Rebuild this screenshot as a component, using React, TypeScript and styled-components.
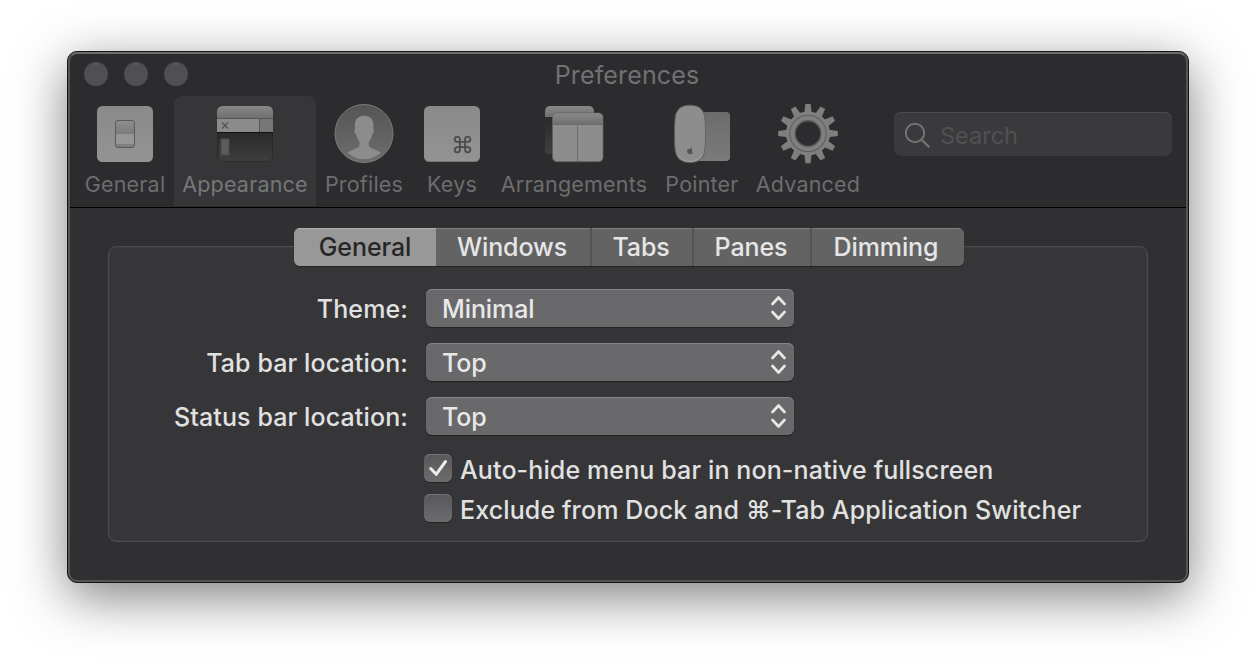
import React from "react";
import styled, { createGlobalStyle } from "styled-components";
import { FaApple } from "react-icons/fa";

const GlobalStyle = createGlobalStyle`
  * { box-sizing: border-box; }
  body { margin: 0; background: #fff; overflow: hidden; }
`;

const Desktop = styled.div`
  width: 1256px;
  height: 666px;
  padding: 51px 67px 0;
  background: #fff;
  font-family: Inter, "Liberation Sans", sans-serif;
`;

const Window = styled.div`
  position: relative;
  display: flex;
  flex-direction: column;
  width: 1122px;
  height: 532px;
  border: 1px solid #151516;
  border-radius: 10px;
  background: #303032;
  box-shadow: 0 14px 52px rgba(0, 0, 0, 0.5);
  &::after {
    content: "";
    position: absolute;
    inset: 0;
    border: 2px solid #545455;
    border-top-color: #6c6c6d;
    border-radius: 9px;
    pointer-events: none;
  }
`;

const Header = styled.header`
  height: 156px;
  border-bottom: 1px solid #000;
  border-radius: 9px 9px 0 0;
  background: #2c2c2e;
`;

const TitleBar = styled.div`
  display: grid;
  grid-template-columns: 1fr auto 1fr;
  align-items: center;
  height: 44px;
  padding: 0 16px;
`;

const Lights = styled.div`
  display: flex;
  gap: 16px;
`;

const Light = styled.span`
  width: 24px;
  height: 24px;
  border-radius: 50%;
  background: #505052;
`;

const Title = styled.h1`
  margin: 2px 2px 0 0;
  font-size: 25px;
  line-height: 30px;
  font-weight: 400;
  letter-spacing: 0.15px;
  color: #717173;
`;

const Toolbar = styled.nav`
  display: flex;
  height: 111px;
  padding: 0 16px 0 8px;
`;

const Tool = styled.div<{ $width: number; $active?: boolean }>`
  display: flex;
  flex-direction: column;
  align-items: center;
  width: ${(p) => p.$width}px;
  height: 110px;
  padding-top: 8px;
  border-radius: 8px 8px 0 0;
  background: ${(p) => (p.$active ? "#363638" : "transparent")};
  color: ${(p) => (p.$active ? "#767678" : "#6d6d6f")};
`;

const ToolIcon = styled.svg`
  display: block;
  width: 60px;
  height: 60px;
`;

const ToolLabel = styled.span`
  margin-top: 7px;
  font-size: 21.5px;
  line-height: 26px;
  letter-spacing: 0.2px;
  white-space: nowrap;
`;

const SearchField = styled.div`
  display: flex;
  align-items: center;
  width: 278px;
  height: 44px;
  margin: 16px 0 0 auto;
  padding: 2px 0 0 10px;
  border-radius: 7px;
  background: #3a3a3c;
  box-shadow: inset 0 1px 0 #4d4d4f;
  font-size: 23.5px;
  color: #515153;
  svg { margin-right: 9px; }
`;

const Body = styled.main`
  display: flex;
  flex-direction: column;
  padding: 20px 40px 0;
`;

const Segments = styled.div`
  z-index: 1;
  display: flex;
  align-self: flex-start;
  height: 38px;
  margin-left: 186px;
  border-radius: 6px;
  overflow: hidden;
  background: #636364;
  box-shadow: 0 1px 1px rgba(0, 0, 0, 0.35);
`;

const Segment = styled.div<{ $width: number; $active?: boolean }>`
  display: flex;
  justify-content: center;
  width: ${(p) => p.$width}px;
  padding-right: 2px;
  border-right: ${(p) => (p.$active ? "0" : "2px solid #545455")};
  background: ${(p) => (p.$active ? "#989899" : "#636364")};
  box-shadow: inset 0 1px 0 ${(p) => (p.$active ? "#aeaeaf" : "#7f7f80")};
  color: ${(p) => (p.$active ? "#262627" : "#e6e6e7")};
  font-size: 25px;
  font-weight: 450;
  line-height: 38px;
  letter-spacing: -0.1px;
  &:first-child { padding-right: 0; }
  &:last-child { border-right: 0; padding-right: 4px; }
`;

const Group = styled.section`
  height: 296px;
  margin-top: -20px;
  padding: 42px 0 0;
  border: 1px solid #4c4c4e;
  border-radius: 8px;
  background: #363638;
  box-shadow: inset 0 0 0 1px #3d3d3f;
  color: #e1e1e2;
  font-size: 25px;
  font-weight: 450;
  letter-spacing: 0.12px;
`;

const Row = styled.div`
  display: grid;
  grid-template-columns: 299px 368px;
  grid-template-rows: 38px;
  column-gap: 18px;
  margin-bottom: 16px;
  line-height: 40px;
`;

const RowLabel = styled.label`
  text-align: right;
  white-space: nowrap;
`;

const Select = styled.div`
  display: flex;
  align-items: center;
  justify-content: space-between;
  height: 38px;
  padding: 0 8px 0 16px;
  border-radius: 6px;
  background: #69696b;
  box-shadow: inset 0 1px 0 #858587, 0 1px 1px rgba(0, 0, 0, 0.4);
  color: #e8e8e9;
  line-height: 38px;
  letter-spacing: -0.1px;
  span { margin-top: 2px; }
`;

const Option = styled.div`
  display: flex;
  align-items: center;
  height: 28px;
  margin: 0 0 12px 315px;
`;

const Options = styled.div`
  padding-top: 3px;
`;

const CheckBox = styled.span`
  width: 28px;
  height: 28px;
  margin-right: 8px;
  border-radius: 6px;
  background: linear-gradient(#58585a, #6c6c6e);
  box-shadow: inset 0 1px 0 #737375, 0 1px 1px rgba(0, 0, 0, 0.35);
`;

const OptionLabel = styled.span`
  margin-top: 3px;
  line-height: 30px;
  white-space: nowrap;
`;

const GeneralIcon = () => (
  <ToolIcon viewBox="0 0 60 60">
    <defs>
      <linearGradient id="plate" x1="0" y1="0" x2="0" y2="1">
        <stop offset="0" stopColor="#8a8a8a" />
        <stop offset="1" stopColor="#939393" />
      </linearGradient>
      <linearGradient id="rocker" x1="0" y1="0" x2="0" y2="1">
        <stop offset="0" stopColor="#8e8e8e" />
        <stop offset="1" stopColor="#7b7b7b" />
      </linearGradient>
    </defs>
    <rect x="2" y="2" width="56" height="56" rx="5.5" fill="url(#plate)" />
    <rect x="20.5" y="16.5" width="19" height="27" rx="2.5" fill="#969696" />
    <path d="M21 30V19a2.5 2.5 0 0 1 2.5-2.5h13A2.5 2.5 0 0 1 39 19v11z" fill="url(#rocker)" />
    <path d="M21 40h18v3H21z" fill="#7e7e7e" />
    <rect x="20.5" y="16.5" width="19" height="27" rx="2.5" fill="none" stroke="#5a5a5a" />
  </ToolIcon>
);

const AppearanceIcon = () => (
  <ToolIcon viewBox="0 0 60 60">
    <defs>
      <clipPath id="app-clip"><rect x="2" y="2" width="56" height="56" rx="5.5" /></clipPath>
      <linearGradient id="app-bar" x1="0" y1="0" x2="0" y2="1">
        <stop offset="0" stopColor="#888" />
        <stop offset="1" stopColor="#707070" />
      </linearGradient>
      <linearGradient id="app-term" x1="0" y1="0" x2="0" y2="1">
        <stop offset="0" stopColor="#2a2a2a" />
        <stop offset="1" stopColor="#3f3f3f" />
      </linearGradient>
    </defs>
    <g clipPath="url(#app-clip)">
      <rect x="2" y="2" width="56" height="12" fill="url(#app-bar)" />
      <rect x="2" y="15" width="56" height="13" fill="#8b8b8b" />
      <rect x="45" y="15" width="13" height="13" fill="#777" />
      <path d="M2 14.5H58M44.5 15v13" stroke="#555" />
      <rect x="2" y="28" width="56" height="31" fill="url(#app-term)" />
      <path d="M2 28.5H58" stroke="#111" />
    </g>
    <path d="M2.5 29v23.5a5 5 0 0 0 5 5h45a5 5 0 0 0 5-5V29" fill="none" stroke="#222" strokeOpacity=".6" />
    <path d="M7 18.5l6 6M13 18.5l-6 6" stroke="#555" strokeWidth="1.3" />
    <rect x="6" y="35" width="8" height="16" fill="#5c5c5c" stroke="#4b4b4b" />
  </ToolIcon>
);

const ProfilesIcon = () => (
  <ToolIcon viewBox="0 0 60 60">
    <defs>
      <linearGradient id="disc" x1="0" y1="0" x2="0" y2="1">
        <stop offset="0" stopColor="#555" />
        <stop offset="1" stopColor="#6d6d6d" />
      </linearGradient>
    </defs>
    <circle cx="30" cy="29.5" r="29" fill="url(#disc)" stroke="#7c7c7c" />
    <path
      d="M13.3 48.7C17 46 21.5 45 24 43.5C26 42.3 25.6 39.5 25.3 37.2C23.5 35.5 22.6 32.5 22.2 30.5C20.5 29.8 19.8 25.5 21.2 25C19.8 16.5 23 11.7 30.3 11.7C37.5 11.7 40.5 16.5 39.2 25C40.4 25.5 39.9 29.8 38.2 30.5C37.8 32.5 36.9 35.5 35 37.2C34.7 39.5 34.3 42.3 36.3 43.5C39 45 43.3 46 46.9 48.7Q30 62 13.3 48.7Z"
      fill="#8c8c8c"
    />
  </ToolIcon>
);

const KeysIcon = () => (
  <ToolIcon viewBox="0 0 60 60">
    <rect x="2" y="2" width="56" height="56" rx="5.5" fill="url(#plate)" />
    <path d="M3 55q1 2.5 4 2.5h46q3 0 4-2.5" fill="none" stroke="#777" />
    <path
      transform="translate(30.060 30.060) scale(.87)"
      d="M15 6v12a3 3 0 1 0 3-3H6a3 3 0 1 0 3 3V6a3 3 0 1 0-3 3h12a3 3 0 1 0-3-3"
      fill="none"
      stroke="#4b4b4b"
      strokeWidth="2.1"
    />
  </ToolIcon>
);

const ArrangementsIcon = () => (
  <ToolIcon viewBox="0 0 60 60">
    <path d="M1 12h10v38H5a4 4 0 0 1-4-4z" fill="url(#app-term)" />
    <path d="M1 13V7a5 5 0 0 1 5-5h39a5 5 0 0 1 5 5v6z" fill="url(#app-bar)" />
    <rect x="8.5" y="9" width="50.5" height="48.7" rx="4.5" fill="#8d8d8d" stroke="#5e5e5e" strokeWidth=".8" />
    <path d="M9 20V13.5a4 4 0 0 1 4-4h41.5a4 4 0 0 1 4 4V20z" fill="url(#app-bar)" />
    <path d="M9 20.5h49.5M33.5 21v36.5" stroke="#6c6c6c" />
  </ToolIcon>
);

const PointerIcon = () => (
  <ToolIcon viewBox="0 0 60 60">
    <defs>
      <linearGradient id="pad" x1="0" y1="0" x2="0" y2="1">
        <stop offset="0" stopColor="#6c6c6c" />
        <stop offset="1" stopColor="#7a7a7a" />
      </linearGradient>
    </defs>
    <rect x="20" y="8" width="38" height="48.7" rx="4" fill="url(#pad)" />
    <path d="M22 56.3h32q3 0 3.5-2.5" fill="none" stroke="#8a8a8a" strokeWidth=".8" />
    <path
      d="M18 1.2C28 1.2 32 6.5 32.9 14C33.7 23 33.7 37 32.9 45.5C32 53.5 27.5 58.6 18 58.6C8.5 58.6 4 53.5 3.1 45.5C2.3 37 2.3 23 3.1 14C4 6.5 8 1.2 18 1.2Z"
      fill="#8d8d8d"
      stroke="#5f5f5f"
      strokeWidth=".9"
    />
    <path d="M6 51q4 6.5 12 6.5t12-6.5" fill="none" stroke="#a0a0a0" />
    <FaApple x="14" y="42.5" size={8} color="#555" />
  </ToolIcon>
);

const teeth = Array.from({ length: 12 }, (_, i) => i * 30);

const AdvancedIcon = () => (
  <ToolIcon viewBox="0 0 60 60">
    {teeth.map((angle) => (
      <path key={angle} d="M26.3 9L27.4 -.3H32.6L33.7 9z" transform={`rotate(${angle} 30 29.5)`} fill="#7f7f7f" />
    ))}
    <circle cx="30" cy="29.5" r="17.3" fill="none" stroke="#7f7f7f" strokeWidth="9.5" />
    <circle cx="30" cy="29.5" r="18.2" fill="none" stroke="#626262" strokeWidth="1.2" />
    <circle cx="30" cy="29.5" r="12.8" fill="none" stroke="#565656" strokeWidth="1.4" />
  </ToolIcon>
);

const tools = [
  { label: "General", width: 98, Icon: GeneralIcon },
  { label: "Appearance", width: 142, Icon: AppearanceIcon },
  { label: "Profiles", width: 96, Icon: ProfilesIcon },
  { label: "Keys", width: 80, Icon: KeysIcon },
  { label: "Arrangements", width: 164, Icon: ArrangementsIcon },
  { label: "Pointer", width: 92, Icon: PointerIcon },
  { label: "Advanced", width: 120, Icon: AdvancedIcon },
];

const segments = [
  { label: "General", width: 142 },
  { label: "Windows", width: 156 },
  { label: "Tabs", width: 102 },
  { label: "Panes", width: 118 },
  { label: "Dimming", width: 152 },
];

const settings = [
  { label: "Theme:", value: "Minimal" },
  { label: "Tab bar location:", value: "Top" },
  { label: "Status bar location:", value: "Top" },
];

const options = [
  { label: "Auto-hide menu bar in non-native fullscreen", checked: true },
  { label: "Exclude from Dock and ⌘-Tab Application Switcher", checked: false },
];

export default function App() {
  return (
    <Desktop>
      <GlobalStyle />
      <Window>
        <Header>
          <TitleBar>
            <Lights><Light /><Light /><Light /></Lights>
            <Title>Preferences</Title>
          </TitleBar>
          <Toolbar>
            {tools.map(({ label, width, Icon }) => (
              <Tool key={label} $width={width} $active={label === "Appearance"}>
                <Icon />
                <ToolLabel>{label}</ToolLabel>
              </Tool>
            ))}
            <SearchField>
              <svg width="27" height="27" viewBox="0 0 27 27" fill="none" stroke="#747476" strokeWidth="1.9">
                <circle cx="11" cy="11" r="9.2" />
                <path d="M17.7 17.7l7.5 7.5" strokeWidth="2.2" />
              </svg>
              Search
            </SearchField>
          </Toolbar>
        </Header>
        <Body>
          <Segments>
            {segments.map(({ label, width }, i) => (
              <Segment key={label} $width={width} $active={i === 0}>{label}</Segment>
            ))}
          </Segments>
          <Group>
            {settings.map(({ label, value }) => (
              <Row key={label}>
                <RowLabel>{label}</RowLabel>
                <Select>
                  <span>{value}</span>
                  <svg width="15" height="26" viewBox="0 0 15 26" fill="none" stroke="#e8e8e9" strokeWidth="2.6" strokeLinecap="round" strokeLinejoin="round">
                    <path d="M1.5 9L7.5 2.5L13.5 9M1.5 17L7.5 23.5L13.5 17" />
                  </svg>
                </Select>
              </Row>
            ))}
            <Options>
              {options.map(({ label, checked }) => (
                <Option key={label}>
                  <CheckBox>
                    {checked && (
                      <svg width="28" height="28" viewBox="0 0 28 28" fill="none" stroke="#ececed" strokeWidth="3" strokeLinecap="round" strokeLinejoin="round">
                        <path d="M6.7 14.5L12.2 20.3L21.5 7.5" />
                      </svg>
                    )}
                  </CheckBox>
                  <OptionLabel>{label}</OptionLabel>
                </Option>
              ))}
            </Options>
          </Group>
        </Body>
      </Window>
    </Desktop>
  );
}
